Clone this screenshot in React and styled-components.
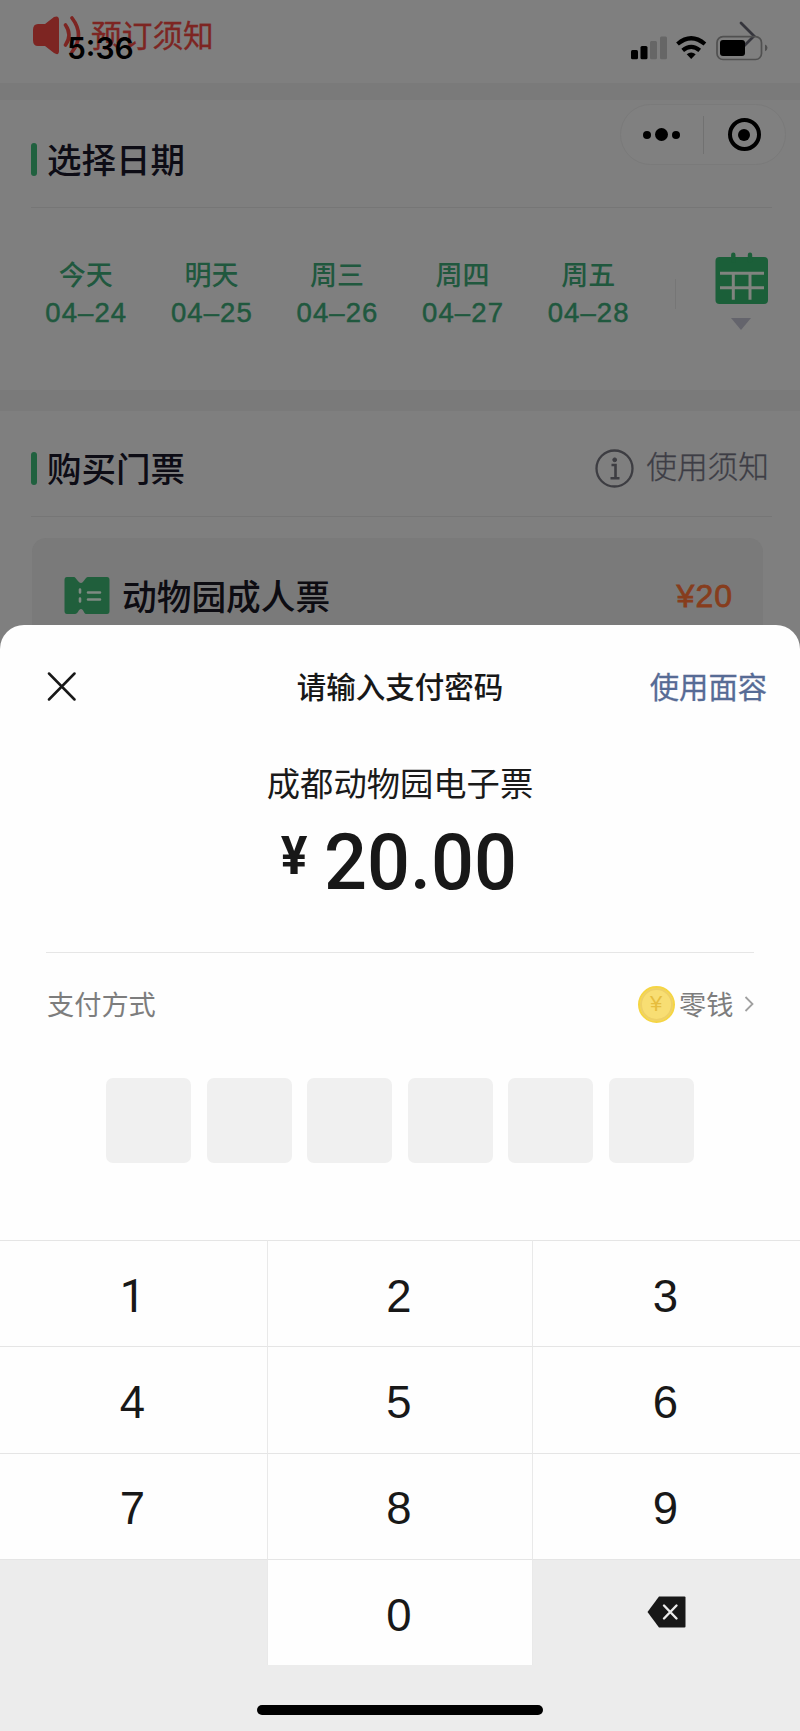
import React from "react";
import styled, { createGlobalStyle } from "styled-components";

const GlobalStyle = createGlobalStyle`
  *, *::before, *::after { box-sizing: border-box; }
  body {
    margin: 0;
    background: #7f7f7f;
    font-family: "Liberation Sans", "Noto Sans CJK SC", sans-serif;
  }
  button { border: 0; padding: 0; margin: 0; background: none; font: inherit; color: inherit; }
  svg { display: block; flex: none; }
`;

const Screen = styled.div`
  position: relative;
  width: 800px;
  height: 1731px;
  overflow: hidden;
  display: flex;
  flex-direction: column;
  background: #7f7f7f;
`;

const BookingPage = styled.div`
  height: 625px;
  flex: none;
  overflow: hidden;
`;

const NoticeBar = styled.div`
  height: 83px;
  padding: 14px 43px 0 32px;
  display: flex;
  align-items: flex-start;
  justify-content: space-between;
`;

const NoticeLabel = styled.div`
  display: flex;
  align-items: flex-start;
  gap: 10px;
  font-size: 30.7px;
  line-height: 46px;
  color: #7d2522;
  -webkit-text-stroke: 0.3px #7d2522;
`;

const Band = styled.div`
  height: ${(p) => p.$height}px;
  background: #7a7a7a;
`;

const SectionHead = styled.header`
  height: ${(p) => p.$height}px;
  margin: 0 28px 0 31px;
  padding: 0 3px 0 0;
  display: flex;
  align-items: center;
  justify-content: space-between;
  border-bottom: 1px solid #767676;
`;

const SectionTitle = styled.h2`
  margin: 0;
  display: flex;
  align-items: center;
  gap: 10px;
  font-size: 34.5px;
  font-weight: 500;
  line-height: 40px;
  color: #0d0c15;
  padding-top: ${(p) => p.$shift}px;

  &::before {
    content: "";
    width: 6px;
    height: 33px;
    margin-bottom: 4px;
    border-radius: 3px;
    background: #20613f;
  }
`;

const HelpLink = styled.button`
  display: flex;
  align-items: center;
  gap: 12px;
  padding-top: 9px;
  font-size: 30.7px;
  font-weight: 300;
  line-height: 40px;
  color: #3d3d45;
  -webkit-text-stroke: 0.3px #3d3d45;
`;

const DateRow = styled.div`
  height: 182px;
  padding: 43px 32px 0 23px;
  display: flex;
  align-items: flex-start;
`;

const DateOption = styled.button`
  flex: none;
  width: 125.6px;
  padding-top: 2px;
  display: flex;
  flex-direction: column;
  align-items: center;
  color: #20583e;
`;

const DayName = styled.span`
  font-size: 27px;
  font-weight: 500;
  line-height: 46px;
`;

const DayDate = styled.span`
  font-size: 27.5px;
  line-height: 27px;
  letter-spacing: 1.1px;
  margin-right: -1px;
  -webkit-text-stroke: 0.5px #20583e;
`;

const DateDivider = styled.div`
  flex: none;
  width: 1px;
  height: 30px;
  margin: 28px 39px 0 24px;
  background: #767676;
`;

const CalendarColumn = styled.div`
  padding-top: 1px;
`;

const TicketCard = styled.div`
  height: 100px;
  margin: 21px 37px 0 32px;
  padding: 38px 30px 0 32px;
  border-radius: 14px;
  background: #7a7a7a;
  display: flex;
  align-items: flex-start;
`;

const TicketName = styled.span`
  margin: 2px 0 0 12px;
  font-size: 34.7px;
  font-weight: 500;
  line-height: 40px;
  color: #0d0c12;
`;

const TicketPrice = styled.span`
  margin-left: auto;
  font-size: 32px;
  line-height: 40px;
  letter-spacing: 1px;
  color: #873d1d;
  -webkit-text-stroke: 0.8px #873d1d;
`;

const StatusBar = styled.div`
  position: absolute;
  inset: 0 0 auto 0;
  height: 83px;
  padding: 31px 32px 0 67px;
  display: flex;
  justify-content: space-between;
  align-items: flex-start;
  color: #000;
`;

const StatusIcons = styled.svg`
  margin-top: 4px;
`;

const NoticeArrow = styled.svg`
  margin-top: 6px;
`;

const Clock = styled.span`
  font-family: Inter, "Liberation Sans", sans-serif;
  font-size: 30px;
  font-weight: 600;
  line-height: 34px;
`;

const Capsule = styled.div`
  position: absolute;
  top: 104px;
  right: 14px;
  width: 166px;
  height: 61px;
  border-radius: 31px;
  border: 1px solid #7a7a7a;
  background: #808080;
  display: flex;
  align-items: center;
`;

const CapsuleLine = styled.i`
  width: 1px;
  height: 38px;
  background: #717171;
`;

const CapsuleButton = styled.button`
  width: 82px;
  display: flex;
  align-items: center;
  justify-content: center;
  gap: 4px;
`;

const Dot = styled.i`
  width: ${(p) => p.$size}px;
  height: ${(p) => p.$size}px;
  border-radius: 50%;
  background: #000;
`;

const Ring = styled.i`
  width: 33px;
  height: 33px;
  border-radius: 50%;
  border: 4px solid #000;
  display: flex;
  align-items: center;
  justify-content: center;
`;

const SheetBackdrop = styled.div`
  flex: 1;
  display: flex;
  background: #7f7f7f;
`;

const Sheet = styled.section`
  flex: 1;
  display: flex;
  flex-direction: column;
  border-radius: 24px 24px 0 0;
  background: #fefefe;
  overflow: hidden;
`;

const SheetHeader = styled.header`
  height: 122px;
  padding: 0 33px 0 47px;
  display: grid;
  grid-template-columns: 1fr auto 1fr;
  align-items: center;
`;

const SheetTitle = styled.h1`
  margin: 0;
  padding-top: 3px;
  transform: translateX(-7px);
  font-size: 29.5px;
  font-weight: 500;
  line-height: 40px;
  color: #181818;
`;

const FaceLink = styled.button`
  justify-self: end;
  padding-top: 3px;
  font-size: 29.3px;
  line-height: 40px;
  color: #576b95;
  -webkit-text-stroke: 0.3px #576b95;
`;

const OrderSummary = styled.div`
  height: 206px;
  margin: 0 46px;
  padding-top: 16px;
  display: flex;
  flex-direction: column;
  align-items: center;
  border-bottom: 1px solid #e6e6e6;
  color: #1a1a1a;
`;

const Merchant = styled.div`
  font-size: 33.3px;
  line-height: 44px;
`;

const Amount = styled.div`
  display: flex;
  align-items: flex-start;
  margin-top: 14px;
  font-family: Roboto, "Liberation Sans", sans-serif;
  font-weight: 500;
  color: #181818;
`;

const Currency = styled.span`
  font-size: 53px;
  font-weight: 700;
  line-height: 52px;
  margin: 9px 13px 0 0;
  transform: scaleX(0.94);
`;

const Figure = styled.span`
  font-size: 78px;
  line-height: 84px;
  transform: scaleX(0.97);
`;

const MethodRow = styled.div`
  height: 100px;
  margin: 0 46px 0 47px;
  padding-top: 2px;
  display: flex;
  align-items: center;
  justify-content: space-between;
  font-size: 27.2px;
  line-height: 36px;
  color: #7d7d7d;
`;

const MethodText = styled.span`
  padding-top: 3px;
`;

const MethodValue = styled.button`
  display: flex;
  align-items: center;
  gap: 4.5px;
`;

const Coin = styled.span`
  width: 37px;
  height: 37px;
  border-radius: 50%;
  border: 2px solid #f5d544;
  background: #f8de73;
  box-shadow: inset 0 0 0 2px #eed066;
  display: flex;
  align-items: center;
  justify-content: center;
  font-size: 22px;
  line-height: 1;
  color: #e6bd3e;
`;

const PinRow = styled.div`
  display: flex;
  justify-content: center;
  gap: 15.6px;
  height: 187px;
  padding-top: 25px;
`;

const PinCell = styled.div`
  width: 85px;
  height: 85px;
  border-radius: 7px;
  background: #f0f0f0;
`;

const Keypad = styled.div`
  flex: 1;
  display: grid;
  grid-template-columns: 267px 266px 267px;
  grid-template-rows: repeat(4, 106.3px) 1fr;
  background: #ececec;
`;

const Key = styled.button`
  display: flex;
  align-items: center;
  justify-content: center;
  padding: ${(p) => (p.$blank ? "0 0 2px" : "6px 2px 0 0")};
  border-top: 1px solid #e5e5e5;
  border-left: ${(p) => (p.$inner ? "1px solid #e9e9e9" : "0")};
  border-right: ${(p) => (p.$inner ? "1px solid #e9e9e9" : "0")};
  background: ${(p) => (p.$blank ? "#ececec" : "#fefefe")};
  font-family: ${(p) => (p.$footless ? "Roboto" : '"Liberation Sans"')}, sans-serif;
  font-size: 45.5px;
  line-height: 50px;
  color: #181818;
`;

const HomeArea = styled.div`
  grid-column: 1 / -1;
  display: flex;
  justify-content: center;
  padding-top: 40px;
`;

const HomeIndicator = styled.div`
  width: 286px;
  height: 10px;
  border-radius: 5px;
  background: #000;
`;

const days = [
  ["今天", "04–24"],
  ["明天", "04–25"],
  ["周三", "04–26"],
  ["周四", "04–27"],
  ["周五", "04–28"],
];

const SpeakerIcon = () => (
  <svg width="49" height="42" viewBox="0 0 49 42" fill="none">
    <path d="M6 10h7L22 3q5-2 5 3v31q0 5-5 2l-9-7H6q-5 0-5-6V16q0-6 5-6Z" fill="#7d2522" />
    <path d="M33.500 11q7 10 0 20M40 4q13 17 0 34" stroke="#7d2522" strokeWidth="3.600" strokeLinecap="round" />
  </svg>
);

const InfoIcon = () => (
  <svg width="39" height="39" viewBox="0 0 39 39" fill="none" stroke="#3d3d42">
    <circle cx="19.500" cy="19.500" r="18" strokeWidth="2.300" />
    <circle cx="19.700" cy="10.800" r="1.900" fill="#3d3d42" strokeWidth="1" />
    <path d="M16.500 16h4v13M15.500 29.200h9" strokeWidth="2.600" />
  </svg>
);

const CalendarIcon = () => (
  <svg width="54" height="80" viewBox="0 0 54 80" fill="none">
    <rect x="0.500" y="5" width="52.500" height="47" rx="4" fill="#1b5f39" />
    <path d="M18.300 2.800v6M35 2.800v6" stroke="#1b5f39" strokeWidth="4.400" strokeLinecap="round" />
    <path d="M5 21.300h44M5 35.700h44M18.300 21.300v26.500M35 21.300v26.500" stroke="#80847f" strokeWidth="3" />
    <path d="M16 66h20L26 78Z" fill="#64646c" />
  </svg>
);

const TicketIcon = () => (
  <svg width="46" height="39" viewBox="0 0 46 39" fill="none">
    <path
      d="M3 1h7c2 0 4 6 7 6s4-6 7-6h19q2.500 0 2.500 3v31q0 3-2.500 3H22c-2 0-2.500-5-5-5s-3 5-6 5H3q-2.500 0-2.500-3V4q0-3 2.500-3Z"
      fill="#205f3c"
    />
    <path d="M16 13.500v3M16 22.500v3M24 16.500h12M24 23.500h12" stroke="#7f8a83" strokeWidth="2.600" strokeLinecap="round" />
  </svg>
);

const PhoneStatus = () => (
  <StatusIcons width="138" height="26" viewBox="630 35 138 26" fill="none">
    <rect x="631" y="50" width="7" height="9.300" rx="1.500" fill="#000" />
    <rect x="640.500" y="46" width="7" height="13.300" rx="1.500" fill="#000" />
    <rect x="650" y="41" width="7" height="18.300" rx="1.500" fill="#666" />
    <rect x="660" y="36.500" width="7" height="22.800" rx="1.500" fill="#666" />
    <path d="M677.500 44q13.700-11.500 27.400 0M682.700 50.300q8.500-7 17 0" stroke="#000" strokeWidth="4.200" />
    <path d="M686.700 54.200q4.500-3.600 9 0L691.200 59Z" fill="#000" />
    <rect x="717" y="36.700" width="44.500" height="22.800" rx="6" stroke="#505050" strokeWidth="1.700" />
    <rect x="720" y="40" width="25" height="16" rx="3" fill="#000" />
    <path d="M765 44.500q2.500 1 2.500 3.300t-2.500 3.400Z" fill="#505050" />
  </StatusIcons>
);

const CloseIcon = () => (
  <svg width="29" height="29" viewBox="0 0 29 29" stroke="#181818" strokeWidth="2.500" strokeLinecap="round">
    <path d="M2 1.500l25.500 26M27.500 1.500L2 27.500" />
  </svg>
);

const BackspaceIcon = () => (
  <svg width="39" height="32" viewBox="0 0 39 32" fill="none">
    <path d="M12 .5h25.500q1 0 1 1v29q0 1-1 1H12L.5 16Z" fill="#181818" />
    <path d="M17 9.500l12.500 13M29.500 9.500L17 22.500" stroke="#ececec" strokeWidth="2.400" strokeLinecap="round" />
  </svg>
);

const ChevronIcon = () => (
  <svg width="16" height="18" viewBox="0 0 16 18" fill="none" stroke="#a0a0a0" strokeWidth="1.800">
    <path d="M7.500 2l7 7-7 7" />
  </svg>
);

const KEYS = ["1", "2", "3", "4", "5", "6", "7", "8", "9", "", "0", "delete"];

export default function App() {
  return (
    <>
      <GlobalStyle />
      <Screen>
        <BookingPage>
          <NoticeBar>
            <NoticeLabel>
              <SpeakerIcon />
              预订须知
            </NoticeLabel>
            <NoticeArrow width="19" height="30" viewBox="0 0 19 30" fill="none" stroke="#35353c" strokeWidth="2.800" strokeLinecap="round">
              <path d="M3 3l13 13L6 26" />
            </NoticeArrow>
          </NoticeBar>
          <Band $height={17} />
          <SectionHead $height={108}>
            <SectionTitle $shift={15}>选择日期</SectionTitle>
          </SectionHead>
          <DateRow>
            {days.map(([name, date]) => (
              <DateOption key={date}>
                <DayName>{name}</DayName>
                <DayDate>{date}</DayDate>
              </DateOption>
            ))}
            <DateDivider />
            <CalendarColumn>
              <CalendarIcon />
            </CalendarColumn>
          </DateRow>
          <Band $height={21} />
          <SectionHead $height={106}>
            <SectionTitle $shift={13}>购买门票</SectionTitle>
            <HelpLink>
              <InfoIcon />
              使用须知
            </HelpLink>
          </SectionHead>
          <TicketCard>
            <TicketIcon />
            <TicketName>动物园成人票</TicketName>
            <TicketPrice>¥20</TicketPrice>
          </TicketCard>
        </BookingPage>

        <StatusBar>
          <Clock>5:36</Clock>
          <PhoneStatus />
        </StatusBar>
        <Capsule>
          <CapsuleButton>
            <Dot $size={8} />
            <Dot $size={13} />
            <Dot $size={8} />
          </CapsuleButton>
          <CapsuleLine />
          <CapsuleButton>
            <Ring>
              <Dot $size={12} />
            </Ring>
          </CapsuleButton>
        </Capsule>

        <SheetBackdrop>
          <Sheet>
            <SheetHeader>
              <CloseIcon />
              <SheetTitle>请输入支付密码</SheetTitle>
              <FaceLink>使用面容</FaceLink>
            </SheetHeader>
            <OrderSummary>
              <Merchant>成都动物园电子票</Merchant>
              <Amount>
                <Currency>¥</Currency>
                <Figure>20.00</Figure>
              </Amount>
            </OrderSummary>
            <MethodRow>
              <MethodText>支付方式</MethodText>
              <MethodValue>
                <Coin>¥</Coin>
                <MethodText>零钱</MethodText>
                <ChevronIcon />
              </MethodValue>
            </MethodRow>
            <PinRow>
              {Array.from({ length: 6 }, (_, i) => (
                <PinCell key={i} />
              ))}
            </PinRow>
            <Keypad>
              {KEYS.map((k, i) => (
                <Key key={i} $inner={i % 3 === 1} $footless={k === "1"} $blank={k === "" || k === "delete"}>
                  {k === "delete" ? <BackspaceIcon /> : k}
                </Key>
              ))}
              <HomeArea>
                <HomeIndicator />
              </HomeArea>
            </Keypad>
          </Sheet>
        </SheetBackdrop>
      </Screen>
    </>
  );
}
